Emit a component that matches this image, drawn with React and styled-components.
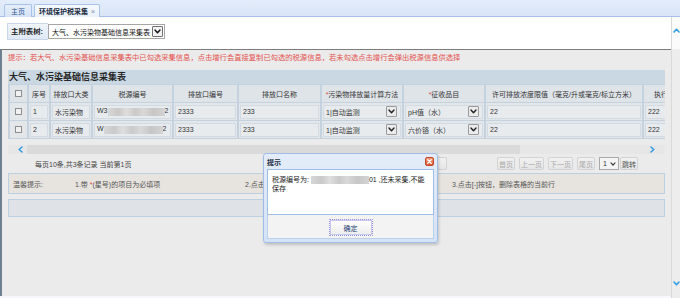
import React from "react";
import styled, { createGlobalStyle } from "styled-components";

const GlobalStyle = createGlobalStyle`
  html, body { margin: 0; padding: 0; background: #fff; }
  body {
    font-family: "Liberation Sans", "Noto Sans CJK SC", sans-serif;
    font-size: 7px;
    color: #333;
    overflow: hidden;
  }
  * { box-sizing: border-box; }
`;

const Page = styled.div`
  width: 680px;
  height: 298px;
  display: flex;
  flex-direction: column;
  overflow: hidden;
`;

const TabStrip = styled.div`
  height: 17px;
  flex: none;
  background: linear-gradient(#e4edfb, #d9e5f7);
  border-bottom: 1px solid #a5c1ea;
  display: flex;
  align-items: flex-end;
  gap: 2px;
  padding-left: 4px;
`;

const Tab = styled.div`
  height: 13px;
  padding: 0 ${(p) => (p.$active ? "4px" : "6px")};
  display: flex;
  align-items: center;
  gap: 3px;
  border: 1px solid #a8c3e8;
  border-bottom: none;
  border-radius: 2px 2px 0 0;
  background: ${(p) =>
    p.$active ? "linear-gradient(#f6f9fd, #eaf1fa)" : "linear-gradient(#e6eefa, #d7e4f5)"};
  font-weight: ${(p) => (p.$active ? 700 : 400)};
  color: ${(p) => (p.$active ? "#1a2b40" : "#2a5590")};
  margin-bottom: -1px;
  white-space: nowrap;
`;

const TabClose = styled.span`
  font-size: 7px;
  font-weight: 400;
  color: #7a8ca8;
`;

const Body = styled.div`
  flex: 1;
  display: flex;
  min-height: 0;
`;

const Main = styled.div`
  width: 671px;
  display: flex;
  flex-direction: column;
`;

const TopBar = styled.div`
  height: 32px;
  flex: none;
  background: #fff;
  display: flex;
  align-items: flex-start;
  padding: 6px 0 0 7px;
`;

const TreeLabel = styled.div`
  height: 17px;
  width: 41px;
  border: 1px solid #c8d6e8;
  border-right: none;
  background: linear-gradient(#f1f5fb, #dfe8f4);
  font-weight: 700;
  font-size: 7.4px;
  line-height: 15px;
  padding-left: 3px;
  color: #1d1d1d;
  white-space: nowrap;
`;

const TopSelect = styled.div`
  margin-top: 1px;
  height: 15px;
  width: 117px;
  border: 1px solid #a6a6a6;
  background: #fff;
  display: flex;
  align-items: center;
  justify-content: space-between;
  padding-left: 3px;
  padding-right: 1px;
  color: #111;
  white-space: nowrap;
`;

const ArrowBox = styled.span`
  width: ${(p) => p.$size || 11}px;
  height: ${(p) => p.$size || 11}px;
  flex: none;
  border: 1px solid ${(p) => p.$border || "#9a9a9a"};
  background: ${(p) => p.$bg || "#ececec"};
  border-radius: 1px;
  display: flex;
  align-items: center;
  justify-content: center;
`;

const Masked = styled.div`
  flex: 1;
  position: relative;
  background: #ebebeb;
  border-left: 2px solid #6f7f92;
  border-top: 1px solid #7d7d7d;
  padding: 0 6px;
  display: flex;
  flex-direction: column;
`;

const BottomEdge = styled.div`
  height: 2px;
  flex: none;
  background: #f6f8fb;
`;

const Hint = styled.div`
  margin-top: 3px;
  height: 10px;
  line-height: 10px;
  font-size: 7.3px;
  color: #e4524f;
  white-space: nowrap;
`;

const Panel = styled.div`
  margin-top: 7px;
  width: 657px;
`;

const PanelTitle = styled.div`
  height: 14px;
  line-height: 14px;
  background: #c9d8e3;
  font-weight: 700;
  font-size: 9px;
  color: #262626;
  padding-left: 1px;
  white-space: nowrap;
`;

const TableWrap = styled.div`
  overflow: hidden;
  width: 657px;
`;

const Table = styled.table`
  table-layout: fixed;
  width: 684px;
  border-collapse: collapse;
`;

const Th = styled.th`
  height: 18px;
  padding: 0;
  background: #dfe4e9;
  border: 1px solid #c3d2de;
  border-width: 1px 2px;
  font-weight: 400;
  color: #333;
  text-align: center;
  white-space: nowrap;
  overflow: hidden;
`;

const Star = styled.span`
  color: #e24a4a;
`;

const Td = styled.td`
  height: 18px;
  padding: 1px;
  background: #e4e7ea;
  border: 1px solid #c3d2de;
  border-width: 1px 2px;
  overflow: hidden;
`;

const Field = styled.div`
  height: 14px;
  border: 1px solid #d2dbe3;
  background: #e8ebee;
  display: flex;
  align-items: center;
  justify-content: space-between;
  padding: 0 ${(p) => (p.$select ? "3px" : "2px")} 0 2px;
  white-space: nowrap;
  color: #333;
`;

const Check = styled.span`
  display: block;
  margin: 0 auto;
  width: 7px;
  height: 7px;
  border: 1px solid #8d8d8d;
  background: #f1f1f1;
`;

const Blur = styled.span`
  display: inline-block;
  width: ${(p) => p.$w}px;
  height: 8px;
  vertical-align: middle;
  background: linear-gradient(
    90deg,
    #d7d7d7 0%,
    #c9c9c9 18%,
    #dedede 32%,
    #cacaca 48%,
    #d9d9d9 62%,
    #c6c6c6 80%,
    #d4d4d4 100%
  );
  filter: blur(0.7px);
`;

const HScroll = styled.div`
  margin-top: 6px;
  height: 9px;
  display: flex;
  align-items: center;
  background: #e6e6e6;
`;

const ScrollArrow = styled.span`
  width: ${(p) => p.$w}px;
  height: 9px;
  flex: none;
  display: flex;
  align-items: center;
  justify-content: ${(p) => p.$justify || "center"};
`;

const Thumb = styled.span`
  width: 493px;
  height: 9px;
  background: #dadada;
`;

const Track = styled.span`
  flex: 1;
`;

const Pager = styled.div`
  margin-top: 2px;
  height: 15px;
  display: flex;
  align-items: center;
  padding-right: 27px;
`;

const PagerInfo = styled.div`
  flex: 1;
  padding-left: 27px;
  color: #444;
  white-space: nowrap;
`;

const PagerBtn = styled.span`
  height: 13px;
  display: flex;
  align-items: center;
  justify-content: center;
  padding: 0 1px;
  border: 1px solid #d3d3d3;
  border-radius: 2px;
  background: linear-gradient(#f1f1f1, #e6e6e6);
  color: ${(p) => (p.$dark ? "#555" : "#aaa")};
  white-space: nowrap;
`;

const PagerGroup = styled.div`
  display: flex;
  align-items: center;
  gap: 4px;
`;

const SaveBtn = styled(PagerBtn)`
  margin-right: 50px;
  width: 40px;
`;

const PageSelect = styled.span`
  height: 13px;
  width: 20px;
  border: 1px solid #a9a9a9;
  background: #f4f4f4;
  display: flex;
  align-items: center;
  justify-content: space-between;
  padding: 0 2px 0 3px;
  color: #333;
  margin-right: -3px;
`;

const TipBox = styled.div`
  margin-top: 2px;
  height: 21px;
  border: 1px solid #bdd0e1;
  background: #e7e3de;
  display: flex;
  align-items: center;
  padding-left: 4px;
  color: #555;
  white-space: nowrap;
`;

const TipCell = styled.span`
  width: ${(p) => (p.$w ? p.$w + "px" : "auto")};
  flex: none;
`;

const EmptyBox = styled.div`
  margin-top: 5px;
  height: 18px;
  border: 1px solid #bdd0e1;
  background: #dfe3e7;
`;

const VScroll = styled.div`
  width: 9px;
  flex: none;
  background: linear-gradient(#fbfbfb 0 32px, #ededed 32px);
  border-left: 1px solid #d9d9d9;
  display: flex;
  flex-direction: column;
  justify-content: space-between;
  align-items: center;
  padding: 11px 0 12px;
`;

const Dialog = styled.div`
  position: absolute;
  left: 261px;
  top: 103px;
  width: 175px;
  height: 90px;
  border: 1px solid #9fbde6;
  border-radius: 3px;
  background: linear-gradient(#e3ecf8, #d6e3f4);
  box-shadow: 1px 2px 3px rgba(0, 0, 0, 0.18);
  padding: 0 3px 3px;
  display: flex;
  flex-direction: column;
`;

const DialogHead = styled.div`
  height: 15px;
  flex: none;
  display: flex;
  align-items: center;
  justify-content: space-between;
  font-weight: 700;
  color: #1b2a3d;
`;

const CloseBtn = styled.span`
  width: 9px;
  height: 9px;
  border: 1px solid #c4472a;
  border-radius: 2px;
  background: linear-gradient(#f39a72, #dc5a33);
  display: flex;
  align-items: center;
  justify-content: center;
`;

const DialogBody = styled.div`
  height: 46px;
  flex: none;
  background: #fff;
  border: 1px solid #9fbde6;
  padding: 6px 5px 0 4px;
  line-height: 8.5px;
  color: #222;
`;

const DialogFoot = styled.div`
  flex: 1;
  background: #f3f3f3;
  border: 1px solid #b9cfee;
  border-top: none;
  display: flex;
  justify-content: center;
  align-items: flex-start;
  padding-top: 4px;
`;

const OkBtn = styled.button`
  width: 44px;
  height: 17px;
  padding: 0;
  border: 1px dotted #8f8fdc;
  outline: 1px solid #c9c9ef;
  outline-offset: -2px;
  background: linear-gradient(#ffffff, #ececec);
  font-family: inherit;
  font-size: 7px;
  color: #1d3f73;
  border-radius: 1px;
`;

const Spacer = styled.span`
  width: ${(p) => p.$w}px;
  flex: none;
`;

const Chevron = ({ dir = "down", color = "#222", w = 7, h = 5, sw = 1.4 }) => {
  const pts = {
    down: "1,1 3.5,3.8 6,1",
    up: "1,4 3.5,1.2 6,4",
    left: "4,1 1.2,3.5 4,6",
    right: "1,1 3.8,3.5 1,6",
  }[dir];
  const vb = dir === "left" || dir === "right" ? "0 0 5 7" : "0 0 7 5";
  return (
    <svg width={w} height={h} viewBox={vb}>
      <polyline points={pts} fill="none" stroke={color} strokeWidth={sw} strokeLinecap="round" strokeLinejoin="round" />
    </svg>
  );
};

const cols = [19, 22, 42, 81, 65, 83, 82, 82, 158, 50];

const rows = [
  { no: "1", kind: "水污染物", pre: "W3", blur: 57, method: "1|自动监测", item: "pH值（水）", lim: "22", exec: "222" },
  { no: "2", kind: "水污染物", pre: "W", blur: 59, method: "1|自动监测", item: "六价铬（水）", lim: "22", exec: "222" },
];

export default function App() {
  return (
    <Page>
      <GlobalStyle />
      <TabStrip>
        <Tab>主页</Tab>
        <Tab $active>
          环境保护税采集<TabClose>×</TabClose>
        </Tab>
      </TabStrip>
      <Body>
        <Main>
          <TopBar>
            <TreeLabel>主附表树:</TreeLabel>
            <TopSelect>
              大气、水污染物基础信息采集表
              <ArrowBox $border="#707070" $bg="#f3f3f3" $size={11}>
                <Chevron color="#111" />
              </ArrowBox>
            </TopSelect>
          </TopBar>
          <Masked>
            <Hint>
              提示：若大气、水污染基础信息采集表中已勾选采集信息，点击增行会直接复制已勾选的税源信息，若未勾选点击增行会弹出税源信息供选择
            </Hint>
            <Panel>
              <PanelTitle>大气、水污染基础信息采集表</PanelTitle>
              <TableWrap>
                <Table>
                  <colgroup>
                    {cols.map((w, i) => (
                      <col key={i} style={{ width: w }} />
                    ))}
                  </colgroup>
                  <thead>
                    <tr>
                      <Th><Check /></Th>
                      <Th>序号</Th>
                      <Th>排放口大类</Th>
                      <Th>税源编号</Th>
                      <Th>排放口编号</Th>
                      <Th>排放口名称</Th>
                      <Th><Star>*</Star>污染物排放量计算方法</Th>
                      <Th><Star>*</Star>征收品目</Th>
                      <Th>许可排放浓度限值（毫克/升或毫克/标立方米）</Th>
                      <Th>执行标准</Th>
                    </tr>
                  </thead>
                  <tbody>
                    {rows.map((r) => (
                      <tr key={r.no}>
                        <Td><Check /></Td>
                        <Td><Field>{r.no}</Field></Td>
                        <Td><Field>{r.kind}</Field></Td>
                        <Td>
                          <Field>
                            <span>
                              {r.pre}
                              <Blur $w={r.blur} />2
                            </span>
                          </Field>
                        </Td>
                        <Td><Field>2333</Field></Td>
                        <Td><Field>233</Field></Td>
                        <Td>
                          <Field $select>
                            {r.method}
                            <ArrowBox><Chevron /></ArrowBox>
                          </Field>
                        </Td>
                        <Td>
                          <Field $select>
                            {r.item}
                            <ArrowBox><Chevron /></ArrowBox>
                          </Field>
                        </Td>
                        <Td><Field>{r.lim}</Field></Td>
                        <Td><Field>{r.exec}</Field></Td>
                      </tr>
                    ))}
                  </tbody>
                </Table>
              </TableWrap>
              <HScroll>
                <ScrollArrow $w={19} $justify="flex-end">
                  <Chevron dir="left" color="#2c9be2" w={5} h={7} sw={1.5} />
                  <Spacer $w={4} />
                </ScrollArrow>
                <Thumb />
                <Track />
                <ScrollArrow $w={20} $justify="flex-start">
                  <Spacer $w={5} />
                  <Chevron dir="right" color="#2c9be2" w={5} h={7} sw={1.5} />
                </ScrollArrow>
              </HScroll>
            </Panel>
            <Pager>
              <PagerInfo>每页10条,共3条记录 当前第1页</PagerInfo>
              <SaveBtn $dark>保存</SaveBtn>
              <PagerGroup>
                <PagerBtn>首页</PagerBtn>
                <PagerBtn>上一页</PagerBtn>
                <PagerBtn>下一页</PagerBtn>
                <PagerBtn>尾页</PagerBtn>
                <PageSelect>
                  1<Chevron w={6} h={4} color="#333" />
                </PageSelect>
                <PagerBtn $dark>跳转</PagerBtn>
              </PagerGroup>
            </Pager>
            <TipBox>
              <TipCell $w={62}>温馨提示:</TipCell>
              <TipCell $w={170}>
                1.带 <Star>*</Star>(星号)的项目为必填项
              </TipCell>
              <TipCell $w={207}>2.点击[+]按钮，在表格中增加一行</TipCell>
              <TipCell>3.点击[-]按钮，删除表格的当前行</TipCell>
            </TipBox>
            <EmptyBox />
            <Dialog>
              <DialogHead>
                <span>提示</span>
                <CloseBtn>
                  <svg width="5" height="5" viewBox="0 0 5 5">
                    <path d="M0.8 0.8 L4.2 4.2 M4.2 0.8 L0.8 4.2" stroke="#fff" strokeWidth="1.3" strokeLinecap="round" />
                  </svg>
                </CloseBtn>
              </DialogHead>
              <DialogBody>
                税源编号为: <Blur $w={58} />01 ,还未采集,不能保存
              </DialogBody>
              <DialogFoot>
                <OkBtn>确定</OkBtn>
              </DialogFoot>
            </Dialog>
          </Masked>
          <BottomEdge />
        </Main>
        <VScroll>
          <Chevron dir="up" color="#2c9be2" w={7} h={5} sw={1.5} />
          <Chevron dir="down" color="#2c9be2" w={7} h={5} sw={1.5} />
        </VScroll>
      </Body>
    </Page>
  );
}
